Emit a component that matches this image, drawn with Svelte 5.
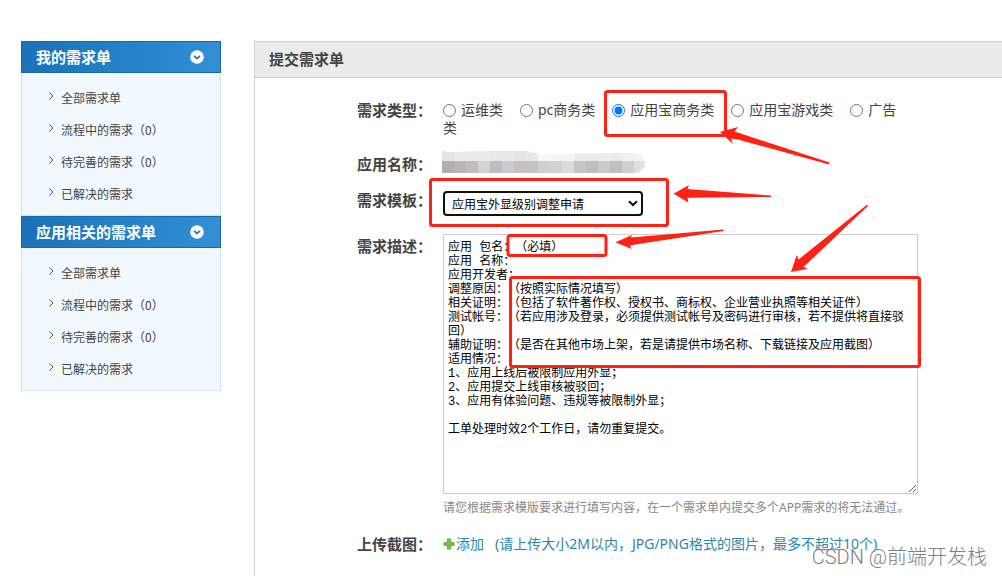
<script>
  const menus = [
    { title: '我的需求单', items: ['全部需求单', '流程中的需求（0）', '待完善的需求（0）', '已解决的需求'] },
    { title: '应用相关的需求单', items: ['全部需求单', '流程中的需求（0）', '待完善的需求（0）', '已解决的需求'] },
  ];

  const types = ['运维类', 'pc商务类', '应用宝商务类', '应用宝游戏类', '广告类'];
  let type = $state('应用宝商务类');

  let open = $state([true, true]);

  let description = $state(`应用 包名：（必填）
应用 名称：
应用开发者：
调整原因：（按照实际情况填写）
相关证明：（包括了软件著作权、授权书、商标权、企业营业执照等相关证件）
测试帐号：（若应用涉及登录，必须提供测试帐号及密码进行审核，若不提供将直接驳回）
辅助证明：（是否在其他市场上架，若是请提供市场名称、下载链接及应用截图）
适用情况：
1、应用上线后被限制应用外显；
2、应用提交上线审核被驳回；
3、应用有体验问题、违规等被限制外显；

工单处理时效2个工作日，请勿重复提交。`);

  // tiles that hide the application name
  const topTiles = [
    '#e6e5e6', '#ebebeb', '#ececec', '#ececec', '#e9e9ea', '#e8e8e8', '#e6e6e6', '#e8e8e8',
    '#f8f8f8', '#f3f3f4', '#f4f4f4', '#ececec', '#e9e9e9', '#ededed', '#ebebeb', '#f0f0f1', '#f4f4f4',
  ];
  const tiles = [
    '#b3afaf', '#b9b5b8', '#bfbdc0', '#d8d1d4', '#bcbdc3', '#cacbcf', '#c4c1be', '#c3c2c4',
    '#d0cfcf', '#cfd3d8', '#dcdcdb', '#c5c5c5', '#bdbdbc', '#cbcac8', '#c0bfbf', '#cfd0d6', '#e0e0e0',
  ];
</script>

<div class="page">
  <aside class="sidebar">
    {#each menus as menu, i}
      <button class="menu-title" type="button" aria-expanded={open[i]} onclick={() => (open[i] = !open[i])}>
        <span>{menu.title}</span>
        <svg width="14" height="14" viewBox="0 0 14 14" aria-hidden="true">
          <circle cx="7" cy="7" r="6.8" fill="#fff" />
          <path d="M4 5.8 L7 8.6 L10 5.8" fill="none" stroke="#1f78bd" stroke-width="1.8" />
        </svg>
      </button>
      {#if open[i]}
        <ul class="menu-list">
          {#each menu.items as item}
            <li>
              <a href="#list">
                <svg width="5" height="8" viewBox="0 0 5 8" aria-hidden="true">
                  <path d="M0.5 0.5 L4 4 L0.5 7.5" fill="none" stroke="#555" />
                </svg>
                {item}
              </a>
            </li>
          {/each}
        </ul>
      {/if}
    {/each}
  </aside>

  <main class="main">
    <h1>提交需求单</h1>

    <form>
      <div class="row" role="radiogroup" aria-labelledby="type-label">
        <span class="label" id="type-label">需求类型：</span>
        <div class="field types">
          {#each types as t}
            <label><input type="radio" name="type" value={t} bind:group={type} />{t}</label>
          {/each}
        </div>
      </div>

      <div class="row">
        <span class="label">应用名称：</span>
        <div class="field">
          <svg class="mosaic" width="203" height="22" viewBox="0 0 203 22" aria-hidden="true">
            <defs>
              <clipPath id="smear">
                <path d="M0 0 L8 1 L40 0 L84 0 L98 3 L180 2 Q202 0 203 11 Q203 20 194 22 L0 22 Z" />
              </clipPath>
            </defs>
            <g clip-path="url(#smear)">
              {#each topTiles as color, i}
                <rect x={i * 12} y="0" width="12" height="10" fill={color} />
              {/each}
              {#each tiles as color, i}
                <rect x={i * 12} y="10" width="12" height="12" fill={color} />
              {/each}
            </g>
          </svg>
        </div>
      </div>

      <div class="row">
        <label class="label" for="template">需求模板：</label>
        <div class="field select-wrap">
          <select id="template">
            <option>应用宝外显级别调整申请</option>
          </select>
          <svg class="caret" width="10" height="7" viewBox="0 0 10 7" aria-hidden="true">
            <path d="M1 1.2 L5 5 L9 1.2" fill="none" stroke="#111" stroke-width="2" />
          </svg>
        </div>
      </div>

      <div class="row">
        <label class="label desc-label" for="desc">需求描述：</label>
        <div class="field">
          <textarea id="desc" bind:value={description} spellcheck="false"></textarea>
          <p class="hint">请您根据需求模版要求进行填写内容，在一个需求单内提交多个APP需求的将无法通过。</p>
        </div>
      </div>

      <div class="row">
        <span class="label">上传截图：</span>
        <div class="field">
          <a class="upload" href="#upload">
            <svg width="12" height="12" viewBox="0 0 12 12" aria-hidden="true">
              <path d="M4.5 1 H7.5 V4.5 H11 V7.5 H7.5 V11 H4.5 V7.5 H1 V4.5 H4.5 Z" fill="#76c043" stroke="#68b03a" />
            </svg>
            <span>添加</span>
            <span class="limit">(请上传大小2M以内，JPG/PNG格式的图片，最多不超过10个)</span>
          </a>
        </div>
      </div>
    </form>
  </main>

  <svg class="marks" width="1002" height="576" viewBox="0 0 1002 576" aria-hidden="true">
    <g fill="none" stroke="#ff2113" stroke-width="3">
      <rect x="605.5" y="91.5" width="120" height="44" rx="2" />
      <rect x="430.5" y="179.5" width="237" height="46" rx="2" />
      <rect x="508" y="235.5" width="98" height="20" rx="2" />
      <rect x="510.5" y="277.5" width="409" height="89" rx="2" />
    </g>
    <g fill="#ff2113">
      <path d="M720 132 L738 127 L734.5 131.5 L829.5 162.5 L829 164.5 L738 139.5 L731 138.5 L733 144 Z" />
      <path d="M673.5 193.7 L689 185 L687.5 189 L771 195.6 L771 197 L687.5 197.8 L688.5 202.5 Z" />
      <path d="M615.5 242.3 L632 235 L631 237.5 L723.5 229.6 L723.5 231 L640 243.8 L630 245.5 L631.5 249 Z" />
      <path d="M791 272 L796.7 255 L798.5 259.5 L867 204.8 L868 206 L803.5 267 L808 268.8 Z" />
    </g>
  </svg>

  <span class="watermark">CSDN @前端开发栈</span>
</div>

<style>
  :global(body) {
    margin: 0;
    background: #fff;
  }

  .page {
    position: relative;
    display: flex;
    align-items: flex-start;
    gap: 33px;
    box-sizing: border-box;
    min-height: 100vh;
    padding: 41px 0 0 21px;
    overflow: hidden;
    font-family: "Noto Sans", "Noto Sans CJK SC", sans-serif;
    font-size: 14px;
    line-height: 18px;
    color: #444;
    text-spacing-trim: space-all;
  }

  .sidebar { flex: 0 0 200px; }

  .menu-title {
    display: flex;
    align-items: center;
    justify-content: space-between;
    box-sizing: border-box;
    width: 100%;
    height: 32px;
    padding: 0 16px 0 14px;
    border: 1px solid #1b68a8;
    background: linear-gradient(100deg, #1a72b8, #3190d6);
    color: #fff;
    font: bold 15px "Noto Sans CJK SC", sans-serif;
    cursor: pointer;
  }

  .menu-title span { padding-bottom: 2px; }

  .menu-list {
    margin: 0;
    padding: 9px 0 5px;
    list-style: none;
    background: #f1f9ff;
    border: 1px solid #cfe4f1;
    border-top: 0;
  }

  .menu-list a {
    display: flex;
    align-items: center;
    gap: 7px;
    padding-left: 27px;
    font-family: "Noto Sans CJK SC", sans-serif;
    font-size: 12px;
    line-height: 32px;
    color: #444;
    text-decoration: none;
  }

  .menu-list svg { margin-bottom: 4px; }

  .main {
    flex: 1;
    min-width: 0;
    min-height: calc(100vh - 41px);
    box-sizing: border-box;
    border-top: 1px solid #d0d0d0;
    border-left: 1px solid #d0d0d0;
  }

  h1 {
    margin: 0;
    padding: 0 14px 1px;
    background: #ebebeb;
    border-bottom: 1px solid #d0d0d0;
    font: bold 15px/34px "Noto Sans CJK SC", sans-serif;
    color: #444;
  }

  form {
    display: flex;
    flex-direction: column;
    gap: 18px;
    padding: 23px 24px 20px 102px;
  }

  .row { display: flex; }

  .label {
    flex: 0 0 86px;
    font-size: 15px;
    font-weight: bold;
    color: #444;
    white-space: nowrap;
  }

  .desc-label { padding-top: 3px; }

  .field {
    flex: 1;
    min-width: 0;
    max-width: 475px;
  }

  .types {
    max-width: 460px;
    word-break: break-all;
  }

  .types label { margin-right: 17px; }

  .types input {
    width: 13px;
    height: 13px;
    margin: 0 5px 0 0;
    vertical-align: -2px;
  }

  .mosaic {
    display: block;
    margin: -4px 0 0 -1px;
  }

  .select-wrap {
    position: relative;
    max-width: 200px;
  }

  select {
    display: block;
    width: 100%;
    height: 25px;
    padding: 0 24px 0 7px;
    border: 2px solid #101010;
    border-radius: 4px;
    background: #fff;
    appearance: none;
    font: 12px "Noto Sans CJK SC", sans-serif;
    color: #000;
  }

  .caret {
    position: absolute;
    right: 5px;
    top: 9px;
    pointer-events: none;
  }

  textarea {
    display: block;
    box-sizing: border-box;
    width: 100%;
    height: 260px;
    padding: 6px 4px 4px;
    border: 1px solid #ccc;
    background: #fff;
    font: 12px/14px "Liberation Mono", "Noto Sans CJK SC", monospace;
    color: #000;
    text-spacing-trim: space-all;
  }

  .hint {
    margin: 5px 0 0;
    font-size: 12px;
    color: #888;
    white-space: nowrap;
  }

  .upload {
    display: flex;
    align-items: center;
    color: #2e86a8;
    text-decoration: none;
    white-space: nowrap;
  }

  .upload span { margin-left: 1px; }

  .upload .limit { margin-left: 11px; }

  .marks {
    position: absolute;
    left: 0;
    top: 0;
    pointer-events: none;
  }

  .watermark {
    position: absolute;
    right: 15px;
    bottom: 8px;
    font: 20px/22px Roboto, "Noto Sans CJK SC", sans-serif;
    font-weight: 300;
    color: #808080;
    text-shadow: 0 0 2px #fff;
    pointer-events: none;
  }
</style>
